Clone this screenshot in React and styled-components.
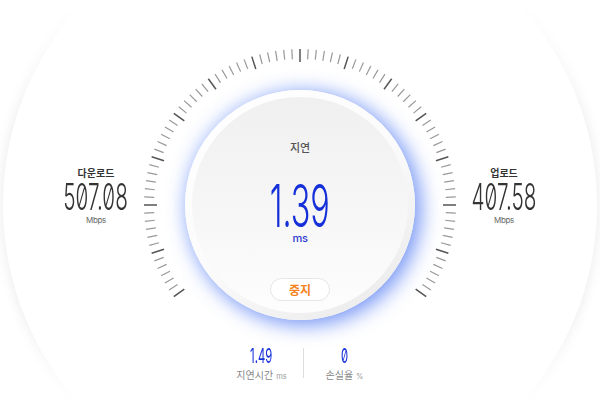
import React from "react";
import styled, { createGlobalStyle } from "styled-components";

const KR = `"Noto Sans CJK KR", "Noto Sans", sans-serif`;
const NUM = `Inter, Roboto, "DejaVu Sans", sans-serif`;
const BLUE = "#1530d8";

const GlobalStyle = createGlobalStyle`
  html, body { margin: 0; padding: 0; background: #fff; }
  body { font-family: ${KR}; }
`;

const Page = styled.div`
  position: relative;
  width: 600px;
  height: 408px;
  overflow: hidden;
  background: #fff;
  box-sizing: border-box;
  padding-top: 45px;
  display: flex;
  flex-direction: column;
  align-items: center;
`;

const BackdropLayer = styled.div`
  position: absolute;
  inset: 0;
  pointer-events: none;
  -webkit-mask-image: linear-gradient(to bottom, transparent 0, #000 120px, #000 320px, transparent 408px);
  mask-image: linear-gradient(to bottom, transparent 0, #000 120px, #000 320px, transparent 408px);
`;

const BackdropCircle = styled.div`
  position: absolute;
  left: 3px;
  top: -92px;
  width: 594px;
  height: 594px;
  border-radius: 50%;
  background: #fff;
  box-shadow: 0 0 14px rgba(0, 0, 0, 0.09);
`;

const Row = styled.div`
  position: relative;
  z-index: 1;
  display: flex;
  width: 600px;
`;

const SideStat = styled.div`
  width: 192px;
  flex-shrink: 0;
  display: flex;
  flex-direction: column;
  align-items: center;
  padding-top: 121px;
`;

const SideLabel = styled.div`
  font-family: ${KR};
  font-size: 10px;
  line-height: 13px;
  font-weight: 700;
  color: #333;
`;

const Condensed = styled.div`
  font-family: ${NUM};
  font-feature-settings: "zero" 1;
  white-space: nowrap;
  transform: scaleX(${(p) => p.$sx || 0.56});
`;

const SideValue = styled(Condensed)`
  font-size: 37px;
  line-height: 32px;
  font-weight: 300;
  color: #333;
  margin-top: 2px;
`;

const SideUnit = styled.div`
  font-family: ${NUM};
  font-size: 8px;
  line-height: 10px;
  color: #666;
  margin-top: 2px;
  letter-spacing: -0.3px;
`;

const Dial = styled.div`
  position: relative;
  width: 320px;
  height: 290px;
  margin: 0 -52px;
  flex-shrink: 0;
`;

const TickSvg = styled.svg`
  display: block;
  width: 320px;
  height: 290px;
`;

const Disk = styled.div`
  position: absolute;
  left: 45px;
  top: 45px;
  width: 230px;
  height: 230px;
  box-sizing: border-box;
  padding: 7px;
  border-radius: 50%;
  display: flex;
  background: linear-gradient(145deg, #ffffff 0%, #fbfbfb 50%, #e8e8e8 100%);
  box-shadow: 6px 5px 20px 0 rgba(70, 110, 240, 0.62),
    0 0 18px 2px rgba(130, 165, 250, 0.38);
`;

const Face = styled.div`
  flex: 1;
  border-radius: 50%;
  background: linear-gradient(to bottom, #f0f0f0 0%, #f6f6f6 50%, #fdfdfd 100%);
  display: flex;
  flex-direction: column;
  align-items: center;
  padding-top: 43px;
  box-sizing: border-box;
`;

const FaceTitle = styled.div`
  font-family: ${KR};
  font-size: 11px;
  line-height: 14px;
  font-weight: 500;
  color: #555;
`;

const FaceValue = styled(Condensed)`
  font-size: 59px;
  line-height: 52px;
  font-weight: 300;
  color: ${BLUE};
  margin-top: 26px;
`;

const FaceUnit = styled.div`
  font-family: ${NUM};
  font-size: 11px;
  line-height: 12px;
  font-weight: 500;
  color: #2a3ad0;
  letter-spacing: -0.3px;
`;

const StopButton = styled.button`
  margin-top: 34px;
  width: 60px;
  height: 23px;
  box-sizing: border-box;
  border: 1px solid #e6e6e6;
  border-radius: 12px;
  background: #fff;
  color: #f5841f;
  font-family: ${KR};
  font-size: 12px;
  font-weight: 700;
  line-height: 21px;
  padding: 0;
  cursor: pointer;
`;

const StatsRow = styled.div`
  position: relative;
  z-index: 1;
  display: flex;
  margin-top: 11px;
  padding-left: 6px;
`;

const StatCol = styled.div`
  width: 82px;
  display: flex;
  flex-direction: column;
  align-items: center;
`;

const StatValue = styled(Condensed)`
  font-size: 20.6px;
  line-height: 20px;
  font-weight: 400;
  color: ${BLUE};
`;

const StatLabel = styled.div`
  font-family: ${KR};
  font-size: 10px;
  line-height: 13px;
  color: #888;
  margin-top: 1.5px;
`;

const StatUnit = styled.span`
  font-family: ${NUM};
  font-size: 7.5px;
  color: #999;
  margin-left: 3px;
`;

const Divider = styled.div`
  width: 1px;
  height: 30px;
  margin-top: 2px;
  background: #dddddd;
`;

function Ticks() {
  const cx = 160;
  const cy = 160;
  const lines = [];
  for (let i = -42; i <= 42; i++) {
    const major = i % 6 === 0;
    const a = (i * 3 * Math.PI) / 180;
    const r1 = 156;
    const r2 = major ? 143 : 146;
    const s = Math.sin(a);
    const c = Math.cos(a);
    lines.push(
      <line
        key={i}
        x1={cx + r1 * s}
        y1={cy - r1 * c}
        x2={cx + r2 * s}
        y2={cy - r2 * c}
        stroke={major ? "#555" : "#999"}
        strokeWidth={major ? 1.5 : 1.2}
      />
    );
  }
  return (
    <TickSvg viewBox="0 0 320 290">
      {lines}
    </TickSvg>
  );
}

function Side({ label, value, unit }) {
  return (
    <SideStat>
      <SideLabel>{label}</SideLabel>
      <SideValue>{value}</SideValue>
      <SideUnit>{unit}</SideUnit>
    </SideStat>
  );
}

export default function App() {
  return (
    <>
      <GlobalStyle />
      <Page>
        <BackdropLayer>
          <BackdropCircle />
        </BackdropLayer>
        <Row>
          <Side label="다운로드" value="507.08" unit="Mbps" />
          <Dial>
            <Ticks />
            <Disk>
              <Face>
                <FaceTitle>지연</FaceTitle>
                <FaceValue $sx={0.55}>1.39</FaceValue>
                <FaceUnit>ms</FaceUnit>
                <StopButton type="button">중지</StopButton>
              </Face>
            </Disk>
          </Dial>
          <Side label="업로드" value="407.58" unit="Mbps" />
        </Row>
        <StatsRow>
          <StatCol>
            <StatValue $sx={0.55}>1.49</StatValue>
            <StatLabel>
              지연시간<StatUnit>ms</StatUnit>
            </StatLabel>
          </StatCol>
          <Divider />
          <StatCol>
            <StatValue $sx={0.55}>0</StatValue>
            <StatLabel>
              손실율<StatUnit>%</StatUnit>
            </StatLabel>
          </StatCol>
        </StatsRow>
      </Page>
    </>
  );
}
